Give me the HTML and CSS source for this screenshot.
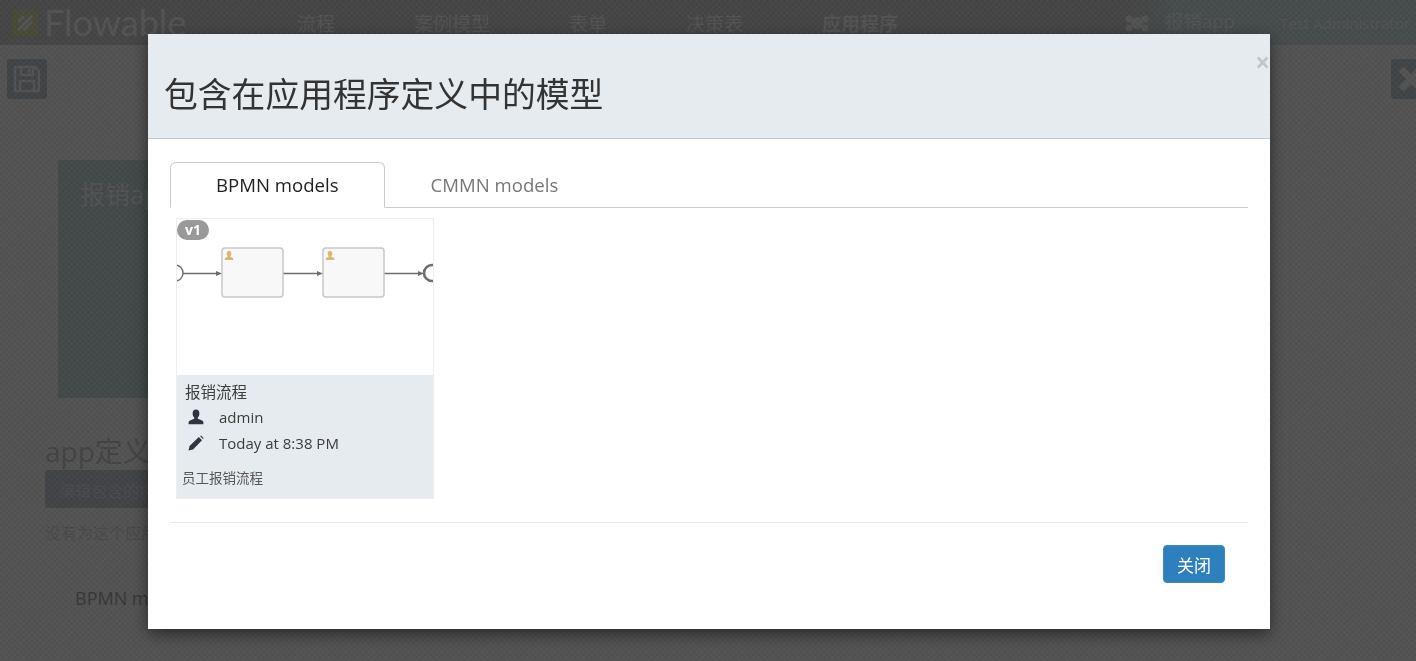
FILE: index.html
```html
<!DOCTYPE html>
<html lang="en">
<head>
    <meta charset="UTF-8">
    <meta name="viewport" content="width=device-width, initial-scale=1.0">
    <title>Flowable</title>
    <link rel="stylesheet" href="styles.css">
</head>
<body>
    <div class="page">
        <header class="navbar">
            <div class="brand">
                <svg class="brand-icon" width="26" height="26" viewBox="0 0 26 26"><rect width="26" height="26" rx="3" fill="#dfe6a8"/><path d="M6 20 L20 6 M6 12 L12 6 M12 20 L20 12" stroke="#fff" stroke-width="3"/></svg>
                <span class="brand-name">Flowable</span>
            </div>
            <nav class="nav-items">
                <span>流程</span>
                <span>案例模型</span>
                <span>表单</span>
                <span>决策表</span>
                <span class="nav-current">应用程序</span>
            </nav>
            <div class="nav-right">
                <svg width="24" height="20" viewBox="0 0 24 20"><circle cx="12" cy="10" r="6" fill="#fff"/><circle cx="4" cy="6" r="3.5" fill="#fff"/><circle cx="20" cy="6" r="3.5" fill="#fff"/><circle cx="4" cy="15" r="3.5" fill="#fff"/><circle cx="20" cy="15" r="3.5" fill="#fff"/></svg>
                <span class="nav-app">报销app</span>
                <span class="nav-user">Test Administrator</span>
            </div>
        </header>

        <div class="toolbar">
            <span class="tool-btn">
                <svg width="30" height="30" viewBox="0 0 30 30"><path d="M3 3 H23 L27 7 V27 H3 Z M9 3 V11 H21 V3 M8 27 V17 H22 V27 M17 5 V9" fill="none" stroke="#fff" stroke-width="2.5"/></svg>
            </span>
            <span class="tool-btn">
                <svg width="30" height="30" viewBox="0 0 30 30"><path d="M5 5 L25 25 M25 5 L5 25" stroke="#fff" stroke-width="7"/></svg>
            </span>
        </div>

        <section class="app-card"><span>报销app</span></section>

        <section class="app-detail">
            <h2>app定义详情</h2>
            <span class="edit-btn">编辑包含的模型</span>
            <p>没有为这个应用定义模型</p>
            <div class="detail-tabs">BPMN models</div>
        </section>
    </div>

    <div class="backdrop"></div>

    <div class="modal-layer">
        <div class="modal">
            <div class="modal-header">
                <h1>包含在应用程序定义中的模型</h1>
                <span class="modal-close">×</span>
            </div>
            <div class="modal-body">
                <ul class="tabs">
                    <li class="tab tab-active">BPMN models</li>
                    <li class="tab">CMMN models</li>
                </ul>
                <div class="model-card">
                    <span class="version-badge">v1</span>
                    <svg class="thumb" width="256" height="156" viewBox="0 0 256 156">
                        <g fill="none" stroke="#6e6e6e">
                            <circle cx="-2" cy="54" r="8" stroke-width="1.4"/>
                            <circle cx="255" cy="54" r="8" stroke-width="2.6"/>
                            <path d="M6 54.5 H40 M106 54.5 H140 M207 54.5 H241" stroke-width="1.3"/>
                        </g>
                        <g fill="#6e6e6e">
                            <path d="M45 54.5 L39 52 V57 Z"/>
                            <path d="M146 54.5 L140 52 V57 Z"/>
                            <path d="M247 54.5 L241 52 V57 Z"/>
                        </g>
                        <g fill="#f8f8f8" stroke="#c8c8c8" stroke-width="1.5">
                            <rect x="45" y="29" width="61" height="49" rx="3"/>
                            <rect x="146" y="29" width="61" height="49" rx="3"/>
                        </g>
                        <g fill="#d8b870">
                            <path d="M52 32 c-1.6 0 -2.4 1.2 -2.4 2.6 c0 1 .4 1.8 1 2.4 v.8 c-1 .6 -2.6 1 -2.8 2 v1.2 h8.4 v-1.2 c-.2 -1 -1.8 -1.4 -2.8 -2 v-.8 c.6 -.6 1 -1.4 1 -2.4 c0 -1.4 -.8 -2.6 -2.4 -2.6 Z"/>
                            <path d="M153 32 c-1.6 0 -2.4 1.2 -2.4 2.6 c0 1 .4 1.8 1 2.4 v.8 c-1 .6 -2.6 1 -2.8 2 v1.2 h8.4 v-1.2 c-.2 -1 -1.8 -1.4 -2.8 -2 v-.8 c.6 -.6 1 -1.4 1 -2.4 c0 -1.4 -.8 -2.6 -2.4 -2.6 Z"/>
                        </g>
                    </svg>
                    <div class="model-info">
                        <div class="model-name">报销流程</div>
                        <div class="model-row">
                            <svg width="16" height="16" viewBox="0 0 16 16"><path d="M8 0.5 C5.8 0.5 4.6 2.2 4.6 4.4 C4.6 6.2 5.3 7.6 6.2 8.4 V9.8 C4 10.8 0.8 11.6 0.6 13 V15.2 H15.4 V13 C15.2 11.6 12 10.8 9.8 9.8 V8.4 C10.7 7.6 11.4 6.2 11.4 4.4 C11.4 2.2 10.2 0.5 8 0.5 Z" fill="#2f3540"/></svg>
                            <span>admin</span>
                        </div>
                        <div class="model-row">
                            <svg width="16" height="16" viewBox="0 0 16 16"><path d="M0.5 15.5 L1.6 11 L10.8 2 L14 5.2 L5 14.4 Z M12 1 L13 0.4 L15.6 3 L15 4 Z" fill="#2f3540"/></svg>
                            <span>Today at 8:38 PM</span>
                        </div>
                        <div class="model-desc">员工报销流程</div>
                    </div>
                </div>
            </div>
            <div class="modal-footer">
                <button class="btn-close">关闭</button>
            </div>
        </div>
    </div>
</body>
</html>
```

FILE: styles.css
```css
* {
    box-sizing: border-box;
}

html, body {
    height: 100%;
}

body {
    margin: 0;
    overflow: hidden;
    background-color: #fff;
    font-family: 'Open Sans', 'Noto Sans CJK SC', sans-serif;
    color: #333;
}

.page {
    height: 661px;
    overflow: hidden;
}

/* top bar under the backdrop */
.navbar {
    display: flex;
    align-items: center;
    height: 45px;
    background-color: #d4d4d4;
    color: #fff;
}

.brand {
    display: flex;
    align-items: center;
    width: 297px;
    padding-left: 12px;
    gap: 6px;
}

.brand-name {
    font-family: 'Lato', sans-serif;
    font-size: 36px;
    line-height: 45px;
}

.nav-items {
    display: flex;
    flex: 1;
    gap: 79px;
    font-size: 19px;
}

.nav-current {
    font-weight: 700;
}

.nav-right {
    display: flex;
    align-items: center;
    width: 291px;
    height: 45px;
    background: linear-gradient(90deg, #d4d4d4 0, #d8ecec 60px);
}

.nav-app {
    margin-left: 16px;
    font-size: 18.5px;
    padding-bottom: 6px;
}

.nav-user {
    margin-left: 45px;
    font-size: 15px;
    white-space: nowrap;
}

.toolbar {
    display: flex;
    justify-content: space-between;
    padding: 14px 0 0 7px;
    margin-right: -15px;
}

.tool-btn {
    display: flex;
    align-items: center;
    justify-content: center;
    width: 40px;
    height: 40px;
    border-radius: 3px;
    background-color: #c4d2dc;
}

.app-card {
    width: 330px;
    height: 238px;
    margin: 61px 0 0 58px;
    padding: 15px 22px;
    background-color: #cfe0e2;
    color: #fff;
    font-size: 25px;
}

.app-detail {
    margin-left: 45px;
}

.app-detail h2 {
    margin: 34px 0 0;
    font-size: 28px;
    font-weight: 400;
    line-height: 38px;
    color: #d0d0d0;
}

.edit-btn {
    display: block;
    width: 300px;
    height: 38px;
    padding: 8px 14px;
    border-radius: 3px;
    background-color: #c8d0d8;
    color: #e0e4e8;
    font-size: 16px;
}

.app-detail p {
    margin: 12px 0 0;
    font-size: 16px;
    color: #e0e0e0;
}

.detail-tabs {
    margin: 42px 0 0 30px;
    font-size: 18px;
    color: #a8a8a8;
}

/* dimmed layer between page and dialog */
.backdrop {
    position: fixed;
    inset: 0;
    background-color: rgba(0, 0, 0, 0.68);
    background-image:
        repeating-linear-gradient(45deg, rgba(0, 0, 0, 0.015) 0 2px, rgba(255, 255, 255, 0.01) 2px 4px),
        repeating-linear-gradient(-45deg, rgba(0, 0, 0, 0.015) 0 2px, rgba(255, 255, 255, 0.01) 2px 4px);
}

.modal-layer {
    position: fixed;
    inset: 0;
    padding-top: 34px;
}

.modal {
    width: 1122px;
    height: 595px;
    margin-left: 148px;
    background-color: #fff;
    box-shadow: 0 5px 15px rgba(0, 0, 0, 0.5);
}

.modal-header {
    position: relative;
    height: 105px;
    padding: 36px 16px 0;
    background-color: #e6ebef;
    border-bottom: 1px solid #bcc8d4;
}

.modal-header h1 {
    margin: 0;
    font-size: 33.8px;
    font-weight: 400;
    line-height: 48px;
    color: #333;
}

.modal-close {
    position: absolute;
    top: 10px;
    right: 0;
    font-size: 26px;
    font-weight: 700;
    line-height: 36px;
    color: #c2c6ca;
}

.modal-body {
    height: 384px;
    margin: 0 22px;
    padding-top: 23px;
    border-bottom: 1px solid #e8e8e8;
}

.tabs {
    display: flex;
    height: 46px;
    margin: 0;
    padding: 0;
    list-style: none;
    border-bottom: 1px solid #ccc;
}

.tab {
    height: 46px;
    padding: 0 45px;
    border: 1px solid transparent;
    border-radius: 6px 6px 0 0;
    font-size: 18.6px;
    line-height: 44px;
    color: #777;
}

.tab-active {
    border-color: #ccc;
    border-bottom-color: #fff;
    background-color: #fff;
    color: #222;
}

.model-card {
    position: relative;
    width: 258px;
    height: 281px;
    margin: 10px 0 0 6px;
    border: 1px solid #eee;
}

.thumb {
    display: block;
}

.version-badge {
    position: absolute;
    top: 1px;
    left: 0;
    width: 32px;
    height: 20px;
    border-radius: 10px;
    background-color: #999;
    color: #fff;
    font-size: 14px;
    font-weight: 700;
    line-height: 20px;
    text-align: center;
}

.model-info {
    height: 123px;
    padding: 5px 5px 0;
    background-color: #e6ebef;
    font-size: 15px;
    color: #3c3c3c;
}

.model-name {
    height: 24px;
    padding-left: 3px;
    font-size: 15.5px;
    line-height: 24px;
}

.model-row {
    display: flex;
    align-items: center;
    gap: 15px;
    height: 26px;
    padding-left: 6px;
}

.model-desc {
    margin-top: 12px;
    font-size: 13.5px;
    line-height: 20px;
    color: #555;
}

.modal-footer {
    display: flex;
    justify-content: flex-end;
    padding: 22px 45px 0 0;
}

.btn-close {
    width: 62px;
    height: 38px;
    border: 1px solid #3a8cc6;
    border-radius: 4px;
    background-color: #2d80bb;
    color: #fff;
    font-family: inherit;
    font-size: 17px;
}
```
